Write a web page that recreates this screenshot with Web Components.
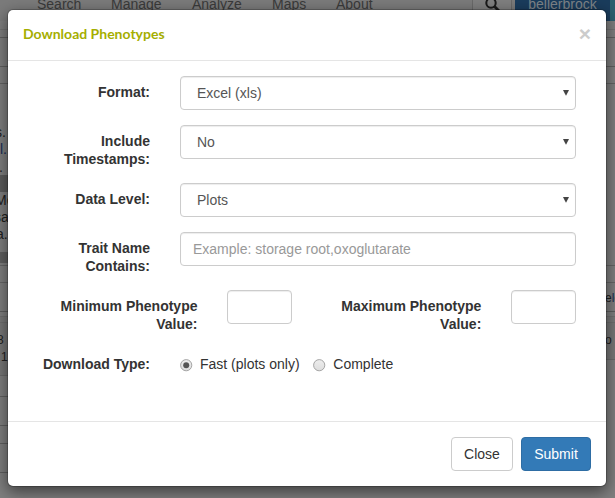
<!DOCTYPE html>
<html lang="en">
<head>
<meta charset="utf-8">
<title>Download Phenotypes</title>
<style>
html,body{margin:0;height:100%;overflow:hidden}
body{font:14px/18px "Liberation Sans",Arial,sans-serif;color:#333;background:#7f7f7f}
</style>
</head>
<body>
<app-shell>
  <page-nav slot="page"></page-nav>
  <page-rows slot="page"></page-rows>
  <modal-dialog>
    <span slot="title">Download Phenotypes</span>
    <form-row label="Format:"><select-box>Excel (xls)</select-box></form-row>
    <form-row label="Include Timestamps:"><select-box>No</select-box></form-row>
    <form-row label="Data Level:"><select-box>Plots</select-box></form-row>
    <form-row label="Trait Name Contains:"><text-box>Example: storage root,oxoglutarate</text-box></form-row>
    <range-row></range-row>
    <form-row label="Download Type:"><radio-option checked>Fast (plots only)</radio-option><radio-option>Complete</radio-option></form-row>
    <action-button slot="footer">Close</action-button>
    <action-button slot="footer" primary>Submit</action-button>
  </modal-dialog>
</app-shell>
<script>
const define = (name, html) => customElements.define(name, class extends HTMLElement {
  constructor() {
    super();
    const t = document.createElement('template');
    t.innerHTML = typeof html === 'function' ? html(this) : html;
    this.attachShadow({mode: 'open'}).append(t.content.cloneNode(true));
  }
});

define('app-shell', `<style>
:host{display:block;position:relative;width:615px;height:498px;overflow:hidden}
.over{position:absolute;left:7px;top:9px}
</style><slot name="page"></slot><div class="over"><slot></slot></div>`);

define('page-nav', `<style>
:host{display:flex;height:21px;overflow:hidden;background:#7b7b7b;color:#3a3a3a;font-size:14px;line-height:18px}
nav{display:flex;width:472px;flex:none;box-sizing:border-box;padding-left:37px;margin-top:-5px}
nav span{flex:none}
.find{width:40px;box-sizing:border-box;border:solid #696969;border-width:0 1px;background:#7f7f7f;flex:none;margin-right:3px}
svg{display:block;margin:-3px 0 0 12px}
.user{width:95px;background:#1a3c5c;color:#7f8488;flex:none;text-align:center;line-height:9px}
.last{flex:1;background:#2d606f}
</style>
<nav><span style="width:74px">Search</span><span style="width:81px">Manage</span><span style="width:80px">Analyze</span><span style="width:64px">Maps</span><span>About</span></nav>
<div class="find"><svg width="15" height="15" fill="none" stroke="#1a1a1a"><circle cx="6" cy="6" r="4.7" stroke-width="2"/><path d="M9.3 9.3L14 14" stroke-width="2.8"/></svg></div>
<div class="user">bellerbrock</div><div class="last"></div>`);

// Strips: height, bottom line colour, background, left text and its offset, right text.
// "half" keeps the background and the line to the left column.
const strips = [
 {h:9,line:'#737373'},{h:8,line:'#606060'},{h:29,line:'#606060'},{h:17,line:'#636363'},
 {h:40},{h:17,l:'s.',x:-5},{h:18,l:'<i>l.</i>',x:0},{h:16,l:'.',x:-1},{h:17,bg:'#5c5c5c',half:1},
 {h:17,l:'Me',x:-5},{h:17,l:'<i>s</i>a',x:-6},{h:17,l:'a.',x:-4},
 {h:9},{h:11,bg:'#606060',half:1},{h:3,line:'#656565'},{h:17,line:'#666'},{h:29,line:'#5e5e5e',r:'e<i>lo</i>'},
 {h:5,line:'#707070'},{h:6,bg:'#797979',line:'#6e6e6e'},{h:9,bg:'#777'},{h:17,bg:'#777',l:'8',x:-3,s:1,r:'o'},
 {h:18,bg:'linear-gradient(to right,#777 300px,transparent 300px),linear-gradient(#777 10px,#6a6a6a 10px,#6a6a6a 11px,transparent 11px)',l:'1',x:1,s:1},
 {h:9,bg:'#777',line:'#6a6a6a',half:1},{h:21,line:'#606060',half:1},{h:29,line:'#606060',half:1},{h:18,line:'#606060',half:1},{h:29,line:'#606060',half:1},{h:24}
];
define('page-rows', `<style>
:host{display:block;font-size:14px;color:#202020}
div{display:flex;justify-content:space-between;box-sizing:border-box;overflow:hidden;white-space:nowrap;line-height:17px}
i{font-style:normal;color:#182c55}
.r{width:10px;overflow:hidden}
.small{font-size:12px}
</style>` + strips.map(({h,l='',x=0,r='',bg='',line='',s,half}) =>
 `<div style="height:${h}px;${half?'width:300px;':''}${bg?`background:${bg};`:''}${line?`border-bottom:1px solid ${line}`:''}"><span${s?' class="small"':''} style="margin-left:${x}px">${l}</span>${r?`<span class="r small"${h===29?' style="line-height:31px"':''}>${r}</span>`:''}</div>`).join(''));

define('modal-dialog', `<style>
:host{display:flex;flex-direction:column;box-sizing:border-box;width:600px;height:478px;border:1px solid rgba(0,0,0,.2);border-radius:6px;background:#fff;background-clip:padding-box;box-shadow:0 5px 15px rgba(0,0,0,.5)}
header{display:flex;justify-content:space-between;height:51px;box-sizing:border-box;padding:14px 15px 15px;border-bottom:1px solid #e5e5e5}
h4{margin:0;font:bold 14px/19px Lato,sans-serif;color:#a5ae00}
.x{font-weight:bold;font-size:21px;line-height:19px;color:#ccc}
main{flex:1;display:flex;flex-direction:column;gap:15px;padding:15px 30px}
footer{display:flex;justify-content:flex-end;gap:8px;padding:15px;border-top:1px solid #e5e5e5}
</style><header><h4><slot name="title"></slot></h4><span class="x">×</span></header><main><slot></slot></main><footer><slot name="footer"></slot></footer>`);

define('form-row', el => `<style>
:host{display:grid;grid-template-columns:112px 396px;column-gap:30px}
label{font-weight:bold;text-align:right;padding-top:7px}
.c{display:flex}
</style><label>${el.getAttribute('label')}</label><div class="c"><slot></slot></div>`);

const box = `box-sizing:border-box;height:34px;border:1px solid #ccc;border-radius:4px;box-shadow:inset 0 1px 1px rgba(0,0,0,.075);background:#fff;`;
define('select-box', `<style>
:host{${box}display:flex;flex:1;align-items:center;justify-content:space-between;padding:0 6px 0 16px;color:#555}
svg{display:block}
</style><span><slot></slot></span><svg width="6" height="6"><path d="M0 0H6L3.2 5.5H2.8Z" fill="#444"/></svg>`);
define('text-box', `<style>:host{${box}display:flex;flex:1;align-items:center;padding:0 12px;color:#999}</style><span><slot></slot></span>`);

define('range-row', `<style>
:host{display:grid;grid-template-columns:159.5px 65px 159.5px 65px;column-gap:29.5px;justify-content:space-between}
label{font-weight:bold;text-align:right;padding-top:7px}
</style><label>Minimum Phenotype<br>Value:</label><text-box></text-box><label>Maximum Phenotype<br>Value:</label><text-box></text-box>`);

define('radio-option', el => `<style>
:host{display:flex;align-items:flex-start;padding-top:7px;margin-right:13px;white-space:nowrap}
svg{margin:4px 7px 0 0}
:host(:not([checked])) svg{margin-right:7.7px}
</style><svg width="13" height="13"><defs><linearGradient id="g" x2="0" y2="1"><stop stop-color="#eee"/><stop offset="1" stop-color="#ddd"/></linearGradient></defs><circle cx="6.2" cy="6.2" r="5.6" fill="url(#g)" stroke="#a5a5a5"/>${el.hasAttribute('checked')?'<circle cx="6.2" cy="6.2" r="3" fill="#555"/>':''}</svg><span><slot></slot></span>`);

define('action-button', `<style>
:host{display:block;box-sizing:border-box;width:62px;height:34px;border:1px solid #ccc;border-radius:4px;text-align:center;line-height:32px;color:#333;background:#fff}
:host([primary]){width:70px;background:#337ab7;border-color:#2e6da4;color:#fff}
</style><slot></slot>`);
</script>
</body>
</html>
